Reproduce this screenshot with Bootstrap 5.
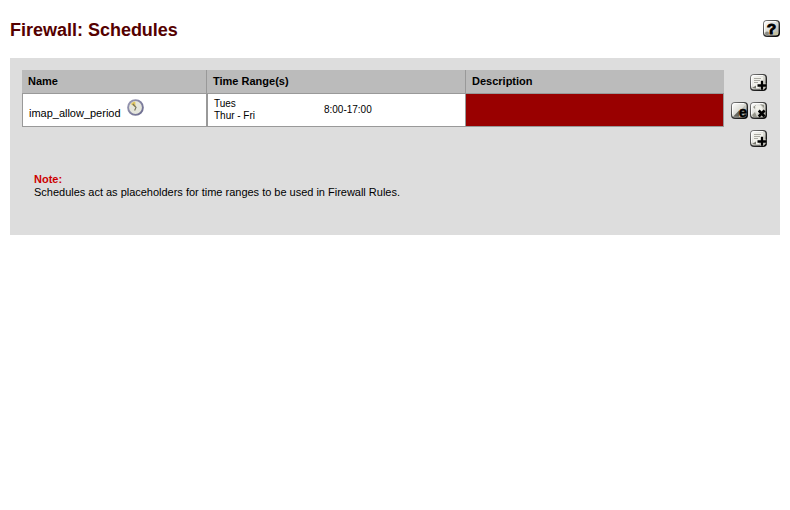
<!DOCTYPE html>
<html lang="en">
<head>
<meta charset="utf-8">
<meta name="viewport" content="width=device-width, initial-scale=1">
<title>Firewall: Schedules</title>
<link href="https://cdn.jsdelivr.net/npm/bootstrap@5.3.0/dist/css/bootstrap.min.css" rel="stylesheet">
<style>
body { font: 11px/13px "Liberation Sans", Arial, sans-serif; color: #000; background: #fff; padding: 20px 10px 0; letter-spacing: -.012px; }
svg { display: block; flex: none; overflow: visible; }
.page-title { font-size: 18px; line-height: 20px; font-weight: 700; color: #500; }
.title-bar { height: 38px; }
.panel { background: #ddd; height: 177px; padding: 12px; }
.sched { width: 702px; display: grid; grid-template-columns: 185px 259px 258px; grid-template-rows: 24px 33px; }
.sched > div { border: 0 solid #999; border-bottom-width: 1px; }
.head-cell { background: #bbb; font-weight: 700; padding: 5px 6px 0; letter-spacing: 0; }
.head-cell.split { border-right-width: 1px !important; }
.name-cell { background: #fff; border-width: 0 1px 1px !important; padding: 5px 6px 0; gap: 6px; }
.name-cell span { padding-top: 8px; }
.time-cell { background: #fff; border-width: 0 1px 1px !important; font-size: 10px; line-height: 12px; padding: 0 6px; }
.days { width: 110px; }
.desc-cell { background: #900; border-right-width: 1px !important; }
.tools { width: 36px; gap: 11px; padding-top: 4px; margin-right: 1px; }
.note { padding: 26px 12px 0; }
.note strong { color: #c00; }
</style>
<script src="https://cdn.jsdelivr.net/npm/bootstrap@5.3.0/dist/js/bootstrap.bundle.min.js"></script>
</head>
<body>
<svg width="0" height="0" class="position-absolute" aria-hidden="true">
  <defs>
    <linearGradient id="face" x1="0" y1="0" x2="1" y2="1"><stop offset="0" stop-color="#fff"/><stop offset=".5" stop-color="#dcdcd6"/><stop offset="1" stop-color="#aaa99f"/></linearGradient>
    <linearGradient id="rim" x1="0" y1="0" x2="1" y2="1"><stop offset="0" stop-color="#888"/><stop offset=".5" stop-color="#333"/><stop offset="1" stop-color="#000"/></linearGradient>
    <linearGradient id="ring" x1="0" y1="0" x2="1" y2="1"><stop offset="0" stop-color="#9b9bb5"/><stop offset="1" stop-color="#6a6a8d"/></linearGradient>
    <symbol id="tile" viewBox="0 0 17 17">
      <rect width="17" height="17" rx="4" fill="url(#rim)"/>
      <rect x="1" y="1" width="14.6" height="14.6" rx="3" fill="url(#face)"/>
      <path d="M1.5 12V4Q1.5 1.5 4 1.5H13" fill="none" stroke="#fff" stroke-opacity=".8"/>
    </symbol>
    <symbol id="add" viewBox="0 0 17 17">
      <use href="#tile" width="17" height="17"/>
      <path d="M3 3H13V11H9V14H6L3 12Z" fill="#f1f1eb"/>
      <path d="M4 4.5H11M4 6.5H10M4 8.5H8" stroke="#aaa9a2"/>
      <path d="M2 14L6 11.5V14.5Z" fill="#77776e"/>
      <path d="M12 6.5V16M7 11.5H16.5" stroke="#f5f5ee" stroke-width="4" opacity=".45"/>
      <path d="M12 6.8V15.8M7.5 11.5H16.5" stroke="#000" stroke-width="2.3"/>
    </symbol>
  </defs>
</svg>

<header class="title-bar d-flex justify-content-between">
  <h1 class="page-title m-0">Firewall: Schedules</h1>
  <svg width="17" height="17" viewBox="0 0 17 17" role="img" aria-label="Help">
    <use href="#tile" width="17" height="17"/>
    <circle cx="4" cy="13.5" r="2" fill="#8b8b83"/><path d="M11 12H15V15H10Z" fill="#c4c1a0"/>
    <text x="8.6" y="14" text-anchor="middle" font-size="15.5" font-weight="700" stroke="#000" stroke-width=".9">?</text>
  </svg>
</header>

<main class="panel">
  <div class="d-flex justify-content-between">
    <section class="sched">
      <div class="head-cell split">Name</div>
      <div class="head-cell split">Time Range(s)</div>
      <div class="head-cell">Description</div>
      <div class="name-cell d-flex align-items-start">
        <span>imap_allow_period</span>
        <svg width="17" height="17" viewBox="0 0 17 17" role="img" aria-label="Active schedule">
          <circle cx="8.5" cy="8.5" r="7.4" fill="#e5e6dc" stroke="url(#ring)" stroke-width="1.9"/>
          <path d="M8.5 8.5L3.8 5Q5.5 2.7 8.3 2.6Z" fill="#e1c75e"/>
          <path d="M5.8 5L9 8.4L7.6 11.5" fill="none" stroke="#77745e" stroke-width="1.2"/>
        </svg>
      </div>
      <div class="time-cell d-flex align-items-center">
        <div class="days">Tues<br>Thur - Fri</div>
        <div>8:00-17:00</div>
      </div>
      <div class="desc-cell"></div>
    </section>

    <aside class="tools d-flex flex-column align-items-end">
      <svg width="17" height="17" role="img" aria-label="Add schedule"><use href="#add" width="17" height="17"/></svg>
      <div class="d-flex justify-content-between w-100">
        <svg width="17" height="17" viewBox="0 0 17 17" role="img" aria-label="Edit schedule">
          <use href="#tile" width="17" height="17"/>
          <path d="M3 14.5L14.5 3V14.5Z" fill="#bcbcb4"/><path d="M2 14.8L8 8.5V14.8Z" fill="#66665f"/>
          <text x="12" y="15" text-anchor="middle" font-size="15" font-weight="700" stroke="#000" stroke-width=".5">e</text>
        </svg>
        <svg width="17" height="17" viewBox="0 0 17 17" role="img" aria-label="Delete schedule">
          <use href="#tile" width="17" height="17"/>
          <path d="M3 5L6 3L5 7ZM10 2L14 6V3ZM2 13L5 10L7 15H3Z" fill="#96968c"/>
          <path d="M5 4L11 4L13 8L7 11Z" fill="#f1f1ea"/>
          <path d="M8.7 8.5L14.6 14.5M14.6 8.5L8.7 14.5" stroke="#000" stroke-width="2.6"/>
        </svg>
      </div>
      <svg width="17" height="17" role="img" aria-label="Add schedule"><use href="#add" width="17" height="17"/></svg>
    </aside>
  </div>
  <div class="note"><strong>Note:</strong><br>Schedules act as placeholders for time ranges to be used in Firewall Rules.</div>
</main>
</body>
</html>
